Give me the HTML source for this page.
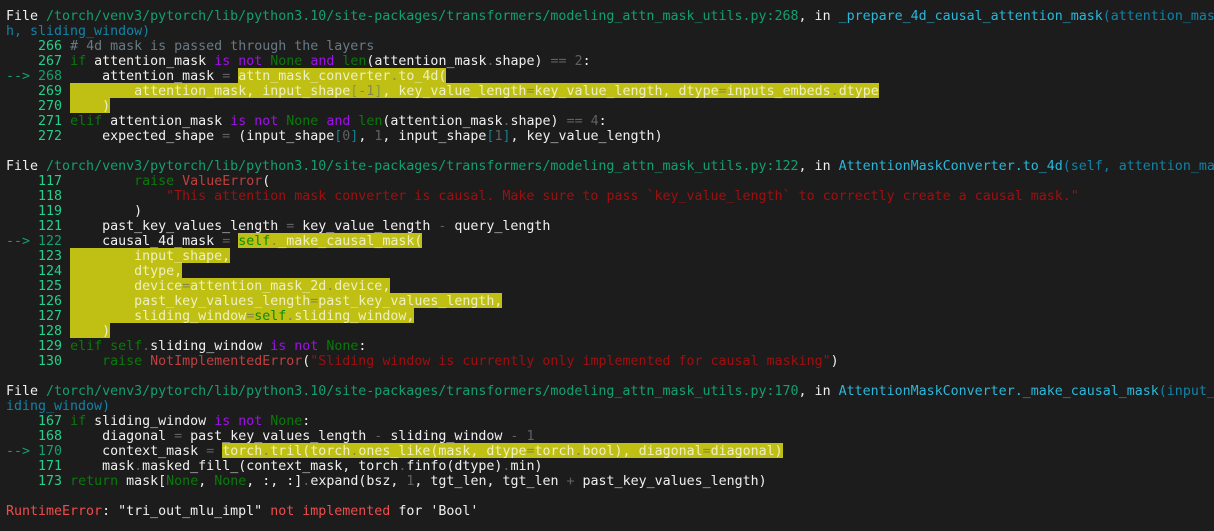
<!DOCTYPE html>
<html><head><meta charset="utf-8"><style>
html,body{margin:0;padding:0;background:#1c1c1c;width:1214px;height:531px;overflow:hidden}
#t{position:absolute;left:6px;top:8px;width:1208px;height:523px;overflow:hidden;font:13.31px/17px "DejaVu Sans Mono",monospace;color:#f0f0f0}
#t div{height:15px;white-space:pre}
.p{color:#12a06e}.n{color:#23d18b}.d{color:#12a06e}.c{color:#6a7a85}
.k{color:#0a7a0a}.m{color:#a010e8}.o{color:#5f6163}.f{color:#29b8db}.a{color:#1283a6}
.s{color:#a00f0f}.e{color:#c04040}.r{color:#f14c4c}.b{color:#10808f}
.h{display:inline-block;height:15px;vertical-align:top;background:#c0c014;color:#eef0c0}
.h .o{color:#85884a}.h .k{color:#0a8a0a}.h .b{color:#7f9a50}
</style></head><body><div id="t"><div>File <span class="p">/torch/venv3/pytorch/lib/python3.10/site-packages/transformers/modeling_attn_mask_utils.py:268</span>, in <span class="f">_prepare_4d_causal_attention_mask</span><span class="a">(attention_mas</span></div><div><span class="a">h, sliding_window)</span></div><div>    <span class="n">266</span> <span class="c"># 4d mask is passed through the layers</span></div><div>    <span class="n">267</span> <span class="k">if</span> attention_mask <span class="m">is</span> <span class="m">not</span> <span class="k">None</span> <span class="m">and</span> <span class="k">len</span>(attention_mask<span class="o">.</span>shape) <span class="o">==</span> <span class="o">2</span>:</div><div><span class="d">--&gt;</span> <span class="d">268</span>     attention_mask <span class="o">=</span> <span class="h">attn_mask_converter<span class="o">.</span>to_4d(</span></div><div>    <span class="n">269</span> <span class="h">        attention_mask, input_shape<span class="b">[</span><span class="o">-1</span><span class="b">]</span>, key_value_length<span class="o">=</span>key_value_length, dtype<span class="o">=</span>inputs_embeds<span class="o">.</span>dtype</span></div><div>    <span class="n">270</span> <span class="h">    )</span></div><div>    <span class="n">271</span> <span class="k">elif</span> attention_mask <span class="m">is</span> <span class="m">not</span> <span class="k">None</span> <span class="m">and</span> <span class="k">len</span>(attention_mask<span class="o">.</span>shape) <span class="o">==</span> <span class="o">4</span>:</div><div>    <span class="n">272</span>     expected_shape <span class="o">=</span> (input_shape<span class="b">[</span><span class="o">0</span><span class="b">]</span>, <span class="o">1</span>, input_shape<span class="b">[</span><span class="o">1</span><span class="b">]</span>, key_value_length)</div><div> </div><div>File <span class="p">/torch/venv3/pytorch/lib/python3.10/site-packages/transformers/modeling_attn_mask_utils.py:122</span>, in <span class="f">AttentionMaskConverter.to_4d</span><span class="a">(self, attention_ma</span></div><div>    <span class="n">117</span>         <span class="k">raise</span> <span class="e">ValueError</span>(</div><div>    <span class="n">118</span>             <span class="s">"This attention mask converter is causal. Make sure to pass `key_value_length` to correctly create a causal mask."</span></div><div>    <span class="n">119</span>         )</div><div>    <span class="n">121</span>     past_key_values_length <span class="o">=</span> key_value_length <span class="o">-</span> query_length</div><div><span class="d">--&gt;</span> <span class="d">122</span>     causal_4d_mask <span class="o">=</span> <span class="h"><span class="k">self</span><span class="o">.</span>_make_causal_mask(</span></div><div>    <span class="n">123</span> <span class="h">        input_shape,</span></div><div>    <span class="n">124</span> <span class="h">        dtype,</span></div><div>    <span class="n">125</span> <span class="h">        device<span class="o">=</span>attention_mask_2d<span class="o">.</span>device,</span></div><div>    <span class="n">126</span> <span class="h">        past_key_values_length<span class="o">=</span>past_key_values_length,</span></div><div>    <span class="n">127</span> <span class="h">        sliding_window<span class="o">=</span><span class="k">self</span><span class="o">.</span>sliding_window,</span></div><div>    <span class="n">128</span> <span class="h">    )</span></div><div>    <span class="n">129</span> <span class="k">elif</span> <span class="k">self</span><span class="o">.</span>sliding_window <span class="m">is</span> <span class="m">not</span> <span class="k">None</span>:</div><div>    <span class="n">130</span>     <span class="k">raise</span> <span class="e">NotImplementedError</span>(<span class="s">"Sliding window is currently only implemented for causal masking"</span>)</div><div> </div><div>File <span class="p">/torch/venv3/pytorch/lib/python3.10/site-packages/transformers/modeling_attn_mask_utils.py:170</span>, in <span class="f">AttentionMaskConverter._make_causal_mask</span><span class="a">(input_shape</span></div><div><span class="a">iding_window)</span></div><div>    <span class="n">167</span> <span class="k">if</span> sliding_window <span class="m">is</span> <span class="m">not</span> <span class="k">None</span>:</div><div>    <span class="n">168</span>     diagonal <span class="o">=</span> past_key_values_length <span class="o">-</span> sliding_window <span class="o">-</span> <span class="o">1</span></div><div><span class="d">--&gt;</span> <span class="d">170</span>     context_mask <span class="o">=</span> <span class="h">torch<span class="o">.</span>tril(torch<span class="o">.</span>ones_like(mask, dtype<span class="o">=</span>torch<span class="o">.</span>bool), diagonal<span class="o">=</span>diagonal)</span></div><div>    <span class="n">171</span>     mask<span class="o">.</span>masked_fill_(context_mask, torch<span class="o">.</span>finfo(dtype)<span class="o">.</span>min)</div><div>    <span class="n">173</span> <span class="k">return</span> mask[<span class="k">None</span>, <span class="k">None</span>, :, :]<span class="o">.</span>expand(bsz, <span class="o">1</span>, tgt_len, tgt_len <span class="o">+</span> past_key_values_length)</div><div> </div><div><span class="r">RuntimeError</span>: "tri_out_mlu_impl" <span class="r">not</span> <span class="r">implemented</span> for 'Bool'</div></div></body></html>
